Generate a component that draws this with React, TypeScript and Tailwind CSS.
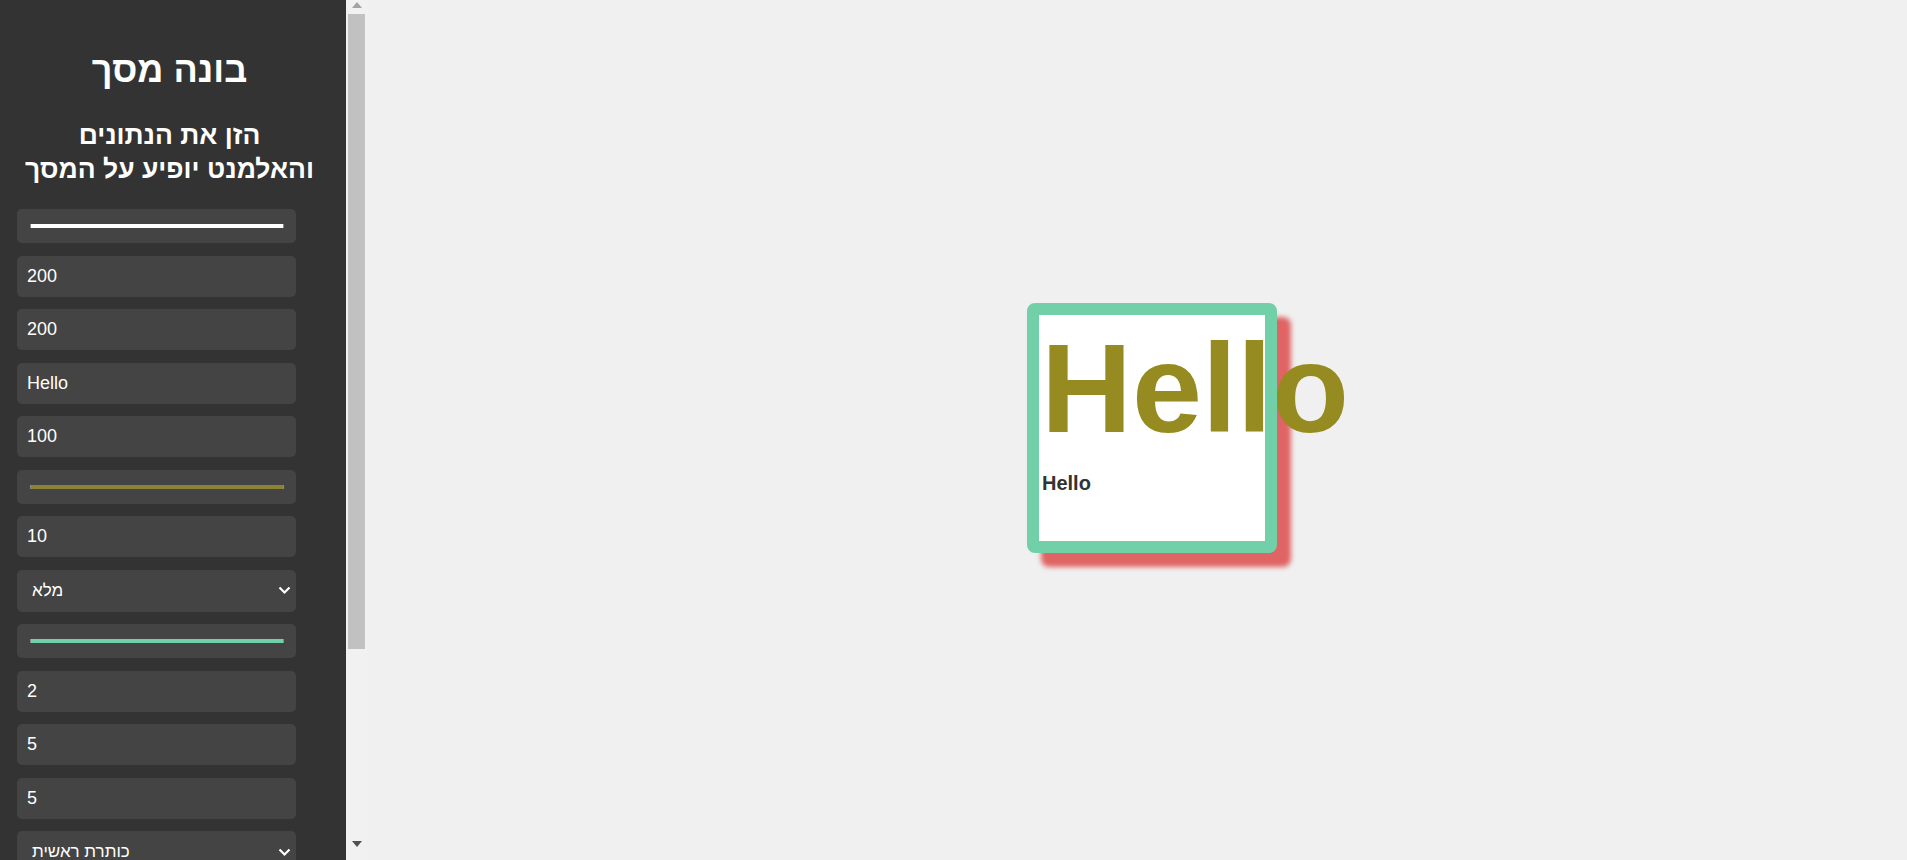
import React from "react";

const TextField = ({ value }: { value: string }) => (
  <div className="w-[279px] h-[41px] rounded-[5px] bg-[#444444] flex items-center pl-[10px] text-[18px] text-white shrink-0">
    {value}
  </div>
);

const ColorField = ({ color }: { color: string }) => (
  <div className="w-[279px] h-[34px] rounded-[5px] bg-[#444444] flex items-center pl-[13px] shrink-0">
    <div className="w-[254px] h-[4px] border-x border-[#8a8a8a]" style={{ backgroundColor: color }} />
  </div>
);

const SelectField = ({ value }: { value: string }) => (
  <div className="w-[279px] h-[42px] rounded-[5px] bg-[#444444] flex items-center justify-between pl-[15px] pr-[5px] text-[17px] text-white shrink-0">
    <span dir="rtl">{value}</span>
    <svg width="13" height="9" viewBox="0 0 13 9">
      <path d="M1.5 1.5 L6.5 6.5 L11.5 1.5" fill="none" stroke="white" strokeWidth="2.2" />
    </svg>
  </div>
);

export default function App() {
  return (
    <div className="w-full h-screen flex overflow-hidden font-['Liberation_Sans','Arimo','DejaVu_Sans',sans-serif] bg-[#f0f0f0]">
      {/* Sidebar */}
      <div className="w-[346px] h-full bg-[#333333] overflow-hidden shrink-0 flex flex-col">
        <div className="w-[339px] pt-[50px] text-center text-white font-bold">
          <h1 dir="rtl" className="text-[36px] leading-[40px]">בונה מסך</h1>
          <h2 dir="rtl" className="mt-[27.5px] text-[26.5px] leading-[34.5px]">
            הזן את הנתונים
            <br />
            והאלמנט יופיע על המסך
          </h2>
        </div>
        <div className="ml-[17px] mt-[22.5px] flex flex-col gap-[12.5px]">
          <ColorField color="#ffffff" />
          <TextField value="200" />
          <TextField value="200" />
          <TextField value="Hello" />
          <TextField value="100" />
          <ColorField color="#8b8236" />
          <TextField value="10" />
          <SelectField value="מלא" />
          <ColorField color="#72d0a8" />
          <TextField value="2" />
          <TextField value="5" />
          <TextField value="5" />
          <SelectField value="כותרת ראשית" />
        </div>
      </div>

      {/* Scrollbar */}
      <div className="w-[21px] h-full bg-[#f1f1f1] shrink-0 flex flex-col">
        <div className="h-[14px] flex items-start justify-center pt-[2px]">
          <svg width="10" height="6" viewBox="0 0 10 6">
            <path d="M5 0 L10 6 L0 6 Z" fill="#a3a3a3" />
          </svg>
        </div>
        <div className="mx-[2px] h-[635px] bg-[#c1c1c1]" />
        <div className="flex-1" />
        <div className="h-[14px] flex items-start justify-center pt-[1px]">
          <svg width="10" height="6" viewBox="0 0 10 6">
            <path d="M0 0 L10 0 L5 6 Z" fill="#505050" />
          </svg>
        </div>
        <div className="h-[6px]" />
      </div>

      {/* Main */}
      <div className="flex-1 h-full flex items-center justify-center pl-[30px] pb-[4px]">
        <div className="w-[250px] h-[250px] shrink-0 border-[12px] border-[#72d0a8] rounded-[8px] bg-white shadow-[14px_14px_5px_#e06464]">
          <div className="pl-[2px] pt-[1px] text-[126px] leading-[146px] font-bold text-[#968b21] whitespace-nowrap">
            Hello
          </div>
          <div className="mt-[10px] pl-[3px] text-[20px] leading-[23px] font-bold text-[#333333]">
            Hello
          </div>
        </div>
      </div>
    </div>
  );
}
